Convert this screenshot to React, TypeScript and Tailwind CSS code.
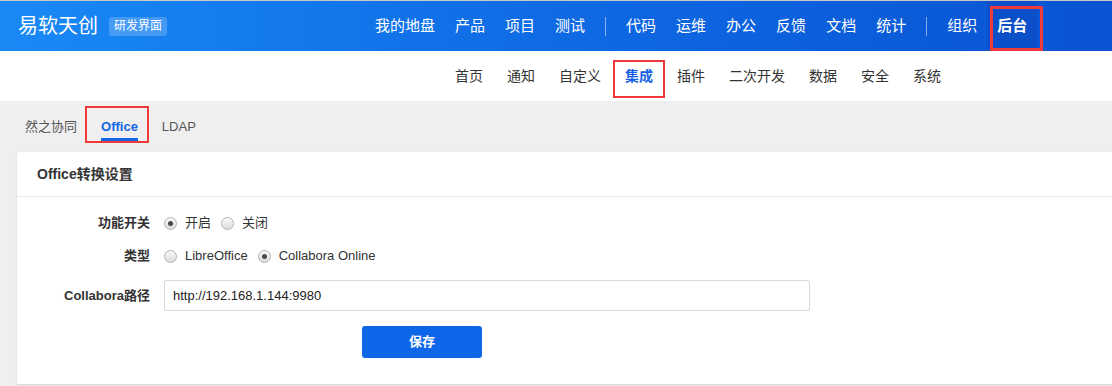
import React from "react";

const FONT = "font-['Liberation_Sans','Noto_Sans_CJK_SC',sans-serif]";

const topNav = ["我的地盘", "产品", "项目", "测试", "|", "代码", "运维", "办公", "反馈", "文档", "统计", "|", "组织"];
const subNav = ["首页", "通知", "自定义", "集成", "插件", "二次开发", "数据", "安全", "系统"];

function Radio({ checked, label }: { checked?: boolean; label: string }) {
  return (
    <label className="flex items-center mr-[10px]">
      <span className="w-[13px] h-[13px] rounded-full border border-[#b3b3b3] bg-gradient-to-b from-[#fafafa] to-[#dcdcdc] flex items-center justify-center">
        {checked && <span className="w-[5px] h-[5px] rounded-full bg-[#4a4a4a]" />}
      </span>
      <span className="ml-[8px] text-[13px] text-[#333]">{label}</span>
    </label>
  );
}

export default function App() {
  return (
    <div className={`${FONT} w-[1112px] h-[386px] bg-[#efefef] overflow-hidden`}>
      {/* top header */}
      <div className="h-[51px] border-t border-[#c9c9c9] bg-gradient-to-r from-[#1a89f6] via-[#0f6ae4] to-[#0a53d3] flex items-center text-white">
        <div className="w-[365px] flex items-center pl-[18px]">
          <span className="text-[20px] leading-none">易软天创</span>
          <span className="ml-[11px] text-[12px] bg-white/20 rounded-[3px] px-[5px] py-[2px] leading-[15px]">
            研发界面
          </span>
        </div>
        <div className="flex items-center h-full">
          {topNav.map((n, i) =>
            n === "|" ? (
              <span key={i} className="mx-[10px] w-px h-[19px] bg-white/50" />
            ) : (
              <span key={i} className="px-[10px] text-[15px]">
                {n}
              </span>
            )
          )}
          <span className="relative h-full px-[10px] flex items-center text-[15px] font-bold bg-[#0b4fc9]">
            后台
            <span className="absolute left-[3px] top-[5px] w-[53px] h-[45px] border-[3px] border-[#f23a3a]" />
          </span>
        </div>
      </div>

      {/* sub nav */}
      <div className="h-[50px] bg-white flex items-center">
        <div className="ml-[443px] flex items-center h-full">
          {subNav.map((n) =>
            n === "集成" ? (
              <span key={n} className="relative px-[12px] text-[14px] font-bold text-[#1562e5]">
                {n}
                <span className="absolute left-0 top-[-6px] w-[52px] h-[38px] border-2 border-[#ef3838]" />
              </span>
            ) : (
              <span key={n} className="px-[12px] text-[14px] text-[#333]">
                {n}
              </span>
            )
          )}
        </div>
      </div>

      {/* tabs */}
      <div className="h-[51px] flex items-center pl-[13px] text-[13px]">
        <span className="px-[12px] text-[#555]">然之协同</span>
        <span className="relative px-[12px] font-bold text-[#1466e2]">
          Office
          <span className="absolute left-[12px] right-[12px] bottom-[-5px] h-[3px] bg-[#1466e2]" />
          <span className="absolute left-[-4px] top-[-11px] w-[64px] h-[37px] border-2 border-[#ef3838]" />
        </span>
        <span className="px-[12px] text-[#555]">LDAP</span>
      </div>

      {/* card */}
      <div className="ml-[17px] bg-white rounded-tl-[4px] shadow-[0_1px_2px_rgba(0,0,0,0.12)]">
        <div className="h-[45px] flex items-center pl-[20px] border-b border-[#e9e9e9] text-[14px] font-bold text-[#333]">
          Office转换设置
        </div>
        <div className="pt-[14px] pb-[26px]">
          <div className="flex items-center h-[24px]">
            <div className="w-[133px] text-right text-[13px] font-bold text-[#333]">功能开关</div>
            <div className="ml-[14px] flex items-center">
              <Radio checked label="开启" />
              <Radio label="关闭" />
            </div>
          </div>
          <div className="flex items-center h-[24px] mt-[9px]">
            <div className="w-[133px] text-right text-[13px] font-bold text-[#333]">类型</div>
            <div className="ml-[14px] flex items-center">
              <Radio label="LibreOffice" />
              <Radio checked label="Collabora Online" />
            </div>
          </div>
          <div className="flex items-center mt-[12px]">
            <div className="w-[133px] text-right text-[13px] font-bold text-[#333]">Collabora路径</div>
            <div className="ml-[14px] w-[646px] h-[31px] border border-[#d9d9d9] rounded-[2px] flex items-center pl-[8px] text-[13px] text-[#222]">
              http://192.168.1.144:9980
            </div>
          </div>
          <div className="flex mt-[15px]">
            <button className="ml-[345px] w-[120px] h-[32px] rounded-[3px] bg-[#0e66e9] text-white text-[13px] font-bold">
              保存
            </button>
          </div>
        </div>
      </div>
    </div>
  );
}
